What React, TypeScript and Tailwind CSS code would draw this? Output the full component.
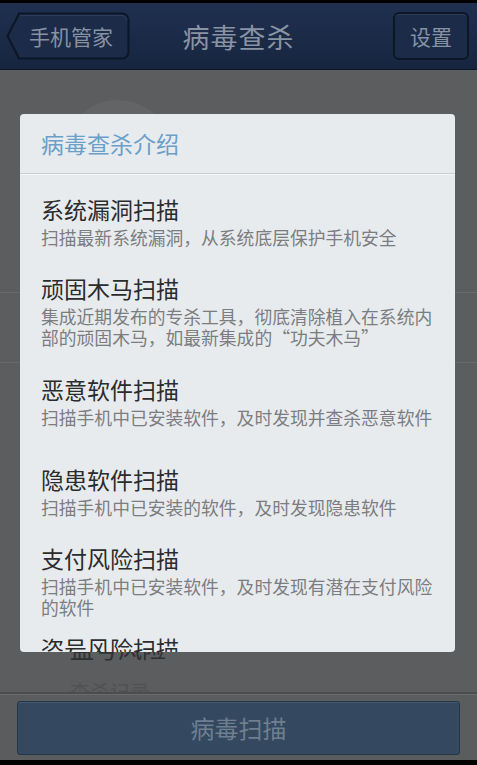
import React from "react";

const FONT = { fontFamily: '"Noto Sans CJK SC", "Noto Sans", sans-serif' };

const ITEMS: { title: string; desc: string }[] = [
  { title: "系统漏洞扫描", desc: "扫描最新系统漏洞，从系统底层保护手机安全" },
  { title: "顽固木马扫描", desc: "集成近期发布的专杀工具，彻底清除植入在系统内部的顽固木马，如最新集成的“功夫木马”" },
  { title: "恶意软件扫描", desc: "扫描手机中已安装软件，及时发现并查杀恶意软件" },
  { title: "隐患软件扫描", desc: "扫描手机中已安装的软件，及时发现隐患软件" },
  { title: "支付风险扫描", desc: "扫描手机中已安装软件，及时发现有潜在支付风险的软件" },
  { title: "盗号风险扫描", desc: "扫描手机中已安装软件，及时发现有盗号风险的软件" },
];

function BackButton() {
  return (
    <button className="relative ml-[6px] h-[48px] w-[124px] justify-self-start">
      <svg className="absolute inset-0" width="124" height="48" viewBox="0 0 124 48">
        <path d="M13 1.5 H116 a6.5 6.5 0 0 1 6.5 6.5 V40 a6.5 6.5 0 0 1 -6.5 6.5 H13 L1.5 24 Z"
              fill="#1b2b48" stroke="#0d1626" strokeWidth="2" />
        <path d="M14 3.5 H116 a4.5 4.5 0 0 1 4.5 4.5" fill="none" stroke="#2c3d5c" strokeWidth="1" />
      </svg>
      <span className="relative block pl-[23px] text-left text-[21px] leading-none text-[#8792a3]">手机管家</span>
    </button>
  );
}

export default function App() {
  return (
    <div className="relative flex h-[765px] w-[477px] flex-col overflow-hidden bg-black" style={FONT}>
      {/* status bar strip */}
      <div className="h-[3px] shrink-0 bg-black" />

      {/* header */}
      <header className="grid h-[67px] shrink-0 grid-cols-[1fr_auto_1fr] items-center border-b border-[#0e1729] bg-gradient-to-b from-[#1f3050] to-[#17253f]">
        <BackButton />
        <h1 className="text-[27px] leading-none tracking-[1px] text-[#8893a3]">病毒查杀</h1>
        <button className="mr-[8px] h-[48px] w-[76px] justify-self-end rounded-[6px] border-2 border-[#0d1626] bg-[#1b2b48] text-[21px] leading-none text-[#8792a3] shadow-[inset_0_1px_0_#2c3d5c]">
          设置
        </button>
      </header>

      {/* page underneath the overlay */}
      <main className="flex h-[622px] shrink-0 flex-col overflow-hidden bg-[#5b5d5f]">
        <div className="h-[222px] shrink-0 pl-[63px] pt-[30px]">
          <div className="h-[110px] w-[110px] rounded-full bg-[#626466]" />
        </div>
        <div className="h-[70px] shrink-0 border-t border-[#67696b]" />
        <div className="min-h-0 flex-1 border-t border-[#67696b] pl-[70px] pt-[273px]">
          <p className="text-[24px] leading-none text-[#2e3032]">盗号风险</p>
          <p className="mt-[22px] text-[20px] leading-none text-[#505254]">查杀记录</p>
        </div>
      </main>

      {/* bottom bar */}
      <footer className="h-[68px] shrink-0 border-t-2 border-[#4a4c4e] bg-[#5a5c5e] px-[17px] pt-[7px] shadow-[inset_0_1px_0_#6a6c6e]">
        <button className="flex h-[54px] w-full items-center justify-center rounded-[3px] border border-[#24364a] bg-[#34495f] text-[24px] leading-none text-[#6f7f90] shadow-[inset_0_1px_0_#43586f]">
          病毒扫描
        </button>
      </footer>
      <div className="h-[5px] shrink-0 bg-black" />

      {/* dialog */}
      <div className="absolute left-[20px] top-[114px] h-[538px] w-[435px] overflow-hidden rounded-[4px] bg-[#e8ebee]">
        <div className="flex h-[60px] items-center border-b border-[#c9cdd1] px-[21px] shadow-[0_1px_0_#f6f7f8]">
          <h2 className="text-[23px] leading-none text-[#6a9fca]">病毒查杀介绍</h2>
        </div>
        <ul className="pt-[2px]">
          {ITEMS.map((it) => (
            <li key={it.title} className="flex h-[90px] flex-col justify-center pl-[21px] pr-[19px]">
              <div className="text-[23px] leading-[28px] text-[#2b2c2d]">{it.title}</div>
              <div className="mt-[4px] text-[17.8px] leading-[21px] text-[#7b7d80]">{it.desc}</div>
            </li>
          ))}
        </ul>
      </div>
    </div>
  );
}
